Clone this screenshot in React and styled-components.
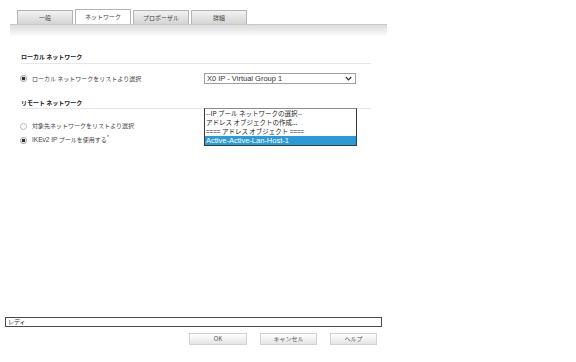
import React from "react";
import styled, { createGlobalStyle } from "styled-components";

const GlobalStyle = createGlobalStyle`
  html, body {
    margin: 0;
    padding: 0;
    background: #ffffff;
  }
  body {
    font-family: "Noto Sans CJK JP", "Liberation Sans", sans-serif;
    color: #333333;
  }
`;

const Page = styled.div`
  width: 576px;
  height: 362px;
  display: flex;
  flex-direction: column;
  overflow: hidden;
`;

const TabArea = styled.div`
  margin: 9px 0 0 10px;
  width: 377px;
`;

const TabRow = styled.div`
  display: flex;
  align-items: flex-end;
  gap: 2px;
  padding-left: 7px;
  height: 15px;
`;

const Tab = styled.div`
  width: ${(p) => p.$width || 56}px;
  height: ${(p) => (p.$active ? 15 : 14)}px;
  box-sizing: border-box;
  border: 1px solid #b4b4b4;
  border-bottom: none;
  background: ${(p) =>
    p.$active ? "#ffffff" : "linear-gradient(#f2f2f2, #d4d4d4)"};
  font-size: 6px;
  line-height: ${(p) => (p.$active ? 14 : 13)}px;
  text-align: center;
  color: #444444;
`;

const TabStrip = styled.div`
  height: 12px;
  border-top: 1px solid #c8c8c8;
  background: linear-gradient(#dcdcdc, #ffffff);
`;

const Content = styled.div`
  padding-left: 21px;
  width: 350px;
`;

const Section = styled.div`
  position: relative;
`;

const Heading = styled.div`
  margin-top: ${(p) => p.$top}px;
  height: ${(p) => p.$height}px;
  border-bottom: 1px solid #e6e6e6;
  font-size: 6px;
  line-height: 8px;
  font-weight: bold;
  color: #222222;
`;

const Row = styled.div`
  display: flex;
  align-items: center;
  margin-top: ${(p) => p.$top}px;
  height: ${(p) => p.$height || 10}px;
`;

const Radio = styled.span`
  width: 7px;
  height: 7px;
  box-sizing: border-box;
  border-radius: 50%;
  border: 1px solid ${(p) => (p.$checked ? "#9a9a9a" : "#b8b8b8")};
  background: ${(p) =>
    p.$checked
      ? "radial-gradient(circle, #333333 0 1.6px, #ffffff 2.1px)"
      : "#ffffff"};
  margin-left: -1px;
  flex-shrink: 0;
`;

const Label = styled.span`
  margin-left: 5px;
  font-size: 6px;
  line-height: 8px;
  color: #444444;
  white-space: nowrap;
  width: ${(p) => p.$width || "auto"};
`;

const Latin = styled.span`
  font-family: "Liberation Sans", sans-serif;
  font-size: 6.5px;
`;

const Sup = styled.sup`
  font-size: 5px;
  line-height: 0;
  vertical-align: 3px;
`;

const Select = styled.div`
  margin-left: ${(p) => p.$offset}px;
  width: 152px;
  height: 11px;
  box-sizing: border-box;
  border: 1px solid #a0a0a0;
  background: #ffffff;
  display: flex;
  align-items: center;
  justify-content: space-between;
  padding: 0 3px 0 2px;
  font-family: "Liberation Sans", sans-serif;
  font-size: 7.5px;
  color: #333333;
`;

const Chevron = styled.svg`
  width: 7px;
  height: 5px;
`;

const ListBox = styled.div`
  position: absolute;
  top: 9px;
  left: 183px;
  width: 153px;
  box-sizing: border-box;
  border: 1px solid #3c3c3c;
  border-top-color: #8c8c8c;
  background: #ffffff;
  display: flex;
  flex-direction: column;
`;

const Option = styled.div`
  height: 9px;
  line-height: 9px;
  padding-left: 1px;
  font-size: ${(p) => (p.$latin ? 7.5 : 6.5)}px;
  font-family: ${(p) =>
    p.$latin
      ? '"Liberation Sans", sans-serif'
      : '"Noto Sans CJK JP", "Liberation Sans", sans-serif'};
  color: ${(p) => (p.$selected ? "#ffffff" : "#222222")};
  background: ${(p) => (p.$selected ? "#2b9ad6" : "transparent")};
  white-space: nowrap;
  overflow: hidden;
`;

const Footer = styled.div`
  margin-top: auto;
  padding-bottom: 17px;
  display: flex;
  flex-direction: column;
  gap: 6px;
`;

const StatusBar = styled.div`
  margin-left: 5px;
  width: 377px;
  height: 10px;
  box-sizing: border-box;
  border: 1px solid #4a4a4a;
  padding-left: 2px;
  font-size: 6px;
  line-height: 8px;
  color: #111111;
`;

const ButtonRow = styled.div`
  display: flex;
  gap: 13px;
  padding-left: 189px;
`;

const Button = styled.div`
  width: ${(p) => p.$width}px;
  height: 12px;
  box-sizing: border-box;
  border: 1px solid #d2d2d2;
  background: linear-gradient(#ffffff, #e4e4e4);
  font-size: 6px;
  line-height: 10px;
  text-align: center;
  color: #555555;
`;

const tabs = [
  { label: "一般" },
  { label: "ネットワーク", active: true },
  { label: "プロポーザル" },
  { label: "詳細" },
];

const options = [
  { label: "--IP プール ネットワークの選択--" },
  { label: "アドレス オブジェクトの作成..." },
  { label: "==== アドレス オブジェクト ====" },
  { label: "Active-Active-Lan-Host-1", latin: true, selected: true },
];

export default function App() {
  return (
    <>
      <GlobalStyle />
      <Page>
        <TabArea>
          <TabRow>
            {tabs.map((t) => (
              <Tab key={t.label} $active={t.active}>
                {t.label}
              </Tab>
            ))}
          </TabRow>
          <TabStrip />
        </TabArea>

        <Content>
          <Section>
            <Heading $top={16} $height={10}>ローカル ネットワーク</Heading>
            <Row $top={9} $height={11}>
              <Radio $checked />
              <Label $width="157px">ローカル ネットワークをリストより選択</Label>
              <Select $offset={15}>
                X0 IP - Virtual Group 1
                <Chevron viewBox="0 0 7 5">
                  <path d="M0.8 1 L3.5 3.8 L6.2 1" fill="none" stroke="#333" strokeWidth="1.2" />
                </Chevron>
              </Select>
            </Row>
          </Section>

          <Section>
            <Heading $top={15} $height={9}>リモート ネットワーク</Heading>
            <Row $top={12}>
              <Radio />
              <Label>対象先ネットワークをリストより選択</Label>
            </Row>
            <Row $top={4}>
              <Radio $checked />
              <Label>
                <Latin>IKEv2 IP</Latin> プールを使用する<Sup>*</Sup>
              </Label>
            </Row>
            <ListBox>
              {options.map((o) => (
                <Option key={o.label} $latin={o.latin} $selected={o.selected}>
                  {o.label}
                </Option>
              ))}
            </ListBox>
          </Section>
        </Content>

        <Footer>
          <StatusBar>レディ</StatusBar>
          <ButtonRow>
            <Button $width={58}>OK</Button>
            <Button $width={57}>キャンセル</Button>
            <Button $width={47}>ヘルプ</Button>
          </ButtonRow>
        </Footer>
      </Page>
    </>
  );
}
